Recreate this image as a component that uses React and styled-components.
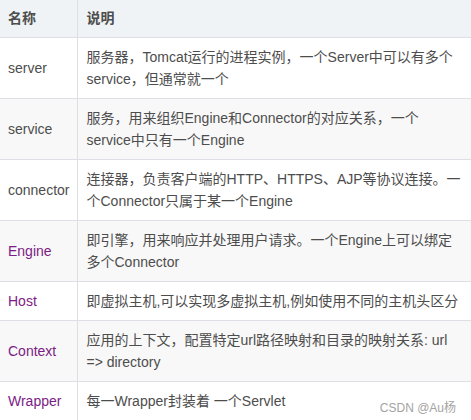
import React from 'react'
import styled, { createGlobalStyle } from 'styled-components'

const GlobalStyle = createGlobalStyle`
  html, body {
    margin: 0;
    padding: 0;
    background: #fff;
  }
  body {
    font-family: "Liberation Sans", "Noto Sans CJK SC", sans-serif;
    overflow: hidden;
  }
`

const Page = styled.div`
  position: relative;
  width: 471px;
  height: 420px;
  overflow: hidden;
`

const Table = styled.table`
  border-collapse: collapse;
  width: 473px;
  margin: -2px 0 0 -1px;
  font-size: 14px;
  line-height: 22px;
  color: #4d4d4d;
`

const HeadCell = styled.th`
  text-align: left;
  font-weight: bold;
  color: #4d4d4d;
  background: #eff3f5;
  padding: 8px;
  border: 1px solid #dddfe4;
`

const Row = styled.tr`
  background: ${props => (props.$striped ? '#f8f8f8' : '#fff')};
`

const NameCell = styled.td`
  padding: 8px;
  border: 1px solid #dddfe4;
  white-space: nowrap;
  color: ${props => (props.$link ? '#7c1c86' : '#4d4d4d')};
`

const DescCell = styled.td`
  padding: 8px 9px 8px 8px;
  border: 1px solid #dddfe4;
`

const Watermark = styled.div`
  position: absolute;
  right: 15px;
  bottom: 5px;
  font-size: 12px;
  color: #a3a3a3;
  text-shadow: 0 0 2px #fff;
`

const rows = [
  { name: 'server', desc: '服务器，Tomcat运行的进程实例，一个Server中可以有多个service，但通常就一个' },
  { name: 'service', desc: '服务，用来组织Engine和Connector的对应关系，一个service中只有一个Engine' },
  { name: 'connector', desc: '连接器，负责客户端的HTTP、HTTPS、AJP等协议连接。一个Connector只属于某一个Engine' },
  { name: 'Engine', link: true, desc: '即引擎，用来响应并处理用户请求。一个Engine上可以绑定多个Connector' },
  { name: 'Host', link: true, desc: '即虚拟主机,可以实现多虚拟主机,例如使用不同的主机头区分' },
  { name: 'Context', link: true, desc: '应用的上下文，配置特定url路径映射和目录的映射关系: url => directory' },
  { name: 'Wrapper', link: true, desc: '每一Wrapper封装着 一个Servlet' }
]

export default function App () {
  return (
    <Page>
      <GlobalStyle />
      <Table>
        <thead>
          <tr>
            <HeadCell>名称</HeadCell>
            <HeadCell>说明</HeadCell>
          </tr>
        </thead>
        <tbody>
          {rows.map((r, i) => (
            <Row key={r.name} $striped={i % 2 === 1}>
              <NameCell $link={r.link}>{r.name}</NameCell>
              <DescCell>{r.desc}</DescCell>
            </Row>
          ))}
        </tbody>
      </Table>
      <Watermark>CSDN @Au杨</Watermark>
    </Page>
  )
}
